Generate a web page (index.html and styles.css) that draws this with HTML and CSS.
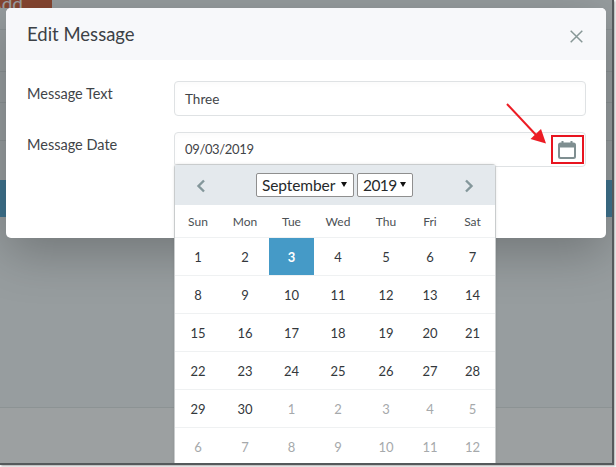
FILE: index.html
```html
<!DOCTYPE html>
<html lang="en">
<head>
<meta charset="utf-8">
<title>Edit Message</title>
<link rel="stylesheet" href="styles.css">
</head>
<body>
<div class="screen">
  <div class="page">
    <div class="page-top"><span class="add-btn">Add</span></div>
    <div class="page-row r1"></div>
    <div class="page-row r2"></div>
    <div class="page-row r3"></div>
    <div class="page-row r4"></div>
    <div class="page-bar"></div>
    <div class="page-space"></div>
    <div class="page-foot"></div>
  </div>
  <div class="backdrop"></div>
  <div class="modal">
    <header class="modal-head">
      <h1 class="modal-title">Edit Message</h1>
      <svg class="close" width="13" height="13" viewBox="0 0 13 13"><path d="M.7.7l11.6 11.6M12.3.7L.7 12.3" fill="none" stroke="#879796" stroke-width="1.500"/></svg>
    </header>
    <div class="modal-body">
      <div class="field">
        <label class="label">Message Text</label>
        <div class="input">Three</div>
      </div>
      <div class="field">
        <label class="label">Message Date</label>
        <div class="input input-date"><span class="date">09/03/2019</span>
          <svg class="cal-icon" width="18" height="18" viewBox="0 0 18 18"><path d="M3.500 0h2v1.500h7V0h2v1.500h1A2.500 2.500 0 0 1 18 4v11.500a2.500 2.500 0 0 1-2.500 2.500h-13A2.500 2.500 0 0 1 0 15.500V4a2.500 2.500 0 0 1 2.500-2.500h1zM2 6.500v9c0 .3.200.5.500.5h13c.3 0 .5-.2.5-.5v-9z" fill="#7f8f91"/></svg>
        </div>
      </div>
    </div>
  </div>
  <div class="calendar">
    <div class="cal-head">
      <svg class="nav" width="10" height="14" viewBox="0 0 10 14"><path d="M8 1.500L2.500 7 8 12.500" fill="none" stroke="#84979b" stroke-width="2.400"/></svg>
      <div class="selects">
        <span class="sel sel-month">September<i class="caret"></i></span>
        <span class="sel sel-year">2019<i class="caret"></i></span>
      </div>
      <svg class="nav" width="10" height="14" viewBox="0 0 10 14"><path d="M2 1.500L7.500 7 2 12.500" fill="none" stroke="#84979b" stroke-width="2.400"/></svg>
    </div>
    <div class="cal-grid">
      <b class="dow">Sun</b><b class="dow">Mon</b><b class="dow">Tue</b><b class="dow">Wed</b><b class="dow">Thu</b><b class="dow">Fri</b><b class="dow">Sat</b>
      <span class="day">1</span><span class="day">2</span><span class="day sel-day">3</span><span class="day">4</span><span class="day">5</span><span class="day">6</span><span class="day">7</span>
      <span class="day">8</span><span class="day">9</span><span class="day">10</span><span class="day">11</span><span class="day">12</span><span class="day">13</span><span class="day">14</span>
      <span class="day">15</span><span class="day">16</span><span class="day">17</span><span class="day">18</span><span class="day">19</span><span class="day">20</span><span class="day">21</span>
      <span class="day">22</span><span class="day">23</span><span class="day">24</span><span class="day">25</span><span class="day">26</span><span class="day">27</span><span class="day">28</span>
      <span class="day">29</span><span class="day">30</span><span class="day off">1</span><span class="day off">2</span><span class="day off">3</span><span class="day off">4</span><span class="day off">5</span>
      <span class="day off">6</span><span class="day off">7</span><span class="day off">8</span><span class="day off">9</span><span class="day off">10</span><span class="day off">11</span><span class="day off">12</span>
    </div>
  </div>
  <div class="callout"></div>
  <svg class="arrow" width="60" height="60" viewBox="0 0 60 60"><path d="M7 5L37 37" stroke="#ec1c24" stroke-width="2" fill="none"/><path d="M46 44.500L30.500 40 41 30z" fill="#ec1c24"/></svg>
</div>
</body>
</html>
```
FILE: styles.css
```css
* { box-sizing: border-box; }
html, body { margin: 0; padding: 0; background: #fff; overflow: hidden; }
body { width: 616px; height: 467px; font-family: Lato, "Noto Sans", sans-serif; color: #3a3f44; }
.screen { position: relative; width: 614px; height: 465px; overflow: hidden; border-right: 2px solid #55595b; border-bottom: 2px solid #55595b; box-shadow: 1px 1px 2px rgba(0,0,0,.35); }

.page { display: flex; flex-direction: column; height: 100%; background: #f6fafb; }
.page-top { height: 30px; border-bottom: 1px solid #e3e8ea; }
.add-btn { display: block; width: 52px; height: 8px; background: #d9653f; color: #fff; font-size: 19px; line-height: 8px; text-indent: -11px; overflow: hidden; }
.page-row { flex: none; border-bottom: 1px solid #e3e8ea; }
.r1 { height: 42px; }
.r2 { height: 31px; }
.r3 { height: 38px; }
.r4 { height: 39px; border-bottom: 0; }
.page-bar { flex: none; height: 37px; background: #5fb4e0; }
.page-space { flex: none; height: 190px; }
.page-foot { flex: 1; border-top: 1px solid #e4e8e9; background: #ffffff; }
.backdrop { position: absolute; inset: 0; background: rgba(20,28,32,.42); }

.modal { position: absolute; left: 6px; top: 8px; width: 600px; height: 230px; background: #fff; border-radius: 5px; box-shadow: 0 14px 50px rgba(0,0,0,.25); }
.modal-head { display: flex; align-items: center; justify-content: space-between; height: 52px; padding: 0 23px 0 21px; background: #f7f8fa; border-radius: 5px 5px 0 0; }
.modal-title { margin: 0; font-size: 18.500px; font-weight: 400; color: #3c4146; }
.close { margin-top: 5px; }
.modal-body { display: flex; flex-direction: column; gap: 16px; padding: 21px 20px 0 21px; }
.field { display: grid; grid-template-columns: 147px 1fr; }
.label { font-size: 14.500px; line-height: 26px; color: #3f4448; }
.input { position: relative; height: 35px; padding-left: 10px; border: 1px solid #dfe2e4; border-radius: 4px; font-size: 13.500px; line-height: 35px; color: #3f4448; box-shadow: inset 0 3px 4px rgba(0,0,0,.015); }
.input-date { line-height: 33px; }
.date { font-size: 13px; letter-spacing: -.35px; }
.cal-icon { position: absolute; right: 9px; top: 8px; }

.calendar { position: absolute; left: 174px; top: 164px; width: 322px; height: 310px; background: #fff; border: 1px solid #c9cccd; border-bottom: 0; border-radius: 4px 4px 0 0; box-shadow: 0 0 3px rgba(0,0,0,.1); }
.cal-head { display: flex; align-items: center; justify-content: space-between; height: 40px; padding: 0 21px; background: #e4e9ed; }
.nav { margin-top: 2px; }
.selects { display: flex; gap: 3px; margin-right: 1px; }
.sel { display: flex; align-items: center; justify-content: space-between; height: 24px; padding: 0 6px 1px 5px; background: #fff; border: 1px solid #8f8f8f; border-radius: 2px; font-size: 15.500px; letter-spacing: -.1px; color: #26292b; }
.sel-month { width: 98px; }
.sel-year { width: 56px; letter-spacing: -.6px; }
.caret { width: 0; height: 0; border: 3px solid transparent; border-top: 5px solid #111; border-bottom: 0; margin-top: -1px; }

.cal-grid { display: grid; grid-template-columns: 46px 48px 45px 48px 48px 40px 45px; grid-template-rows: 32px; grid-auto-rows: 38px; }
.dow { display: flex; align-items: center; justify-content: center; height: 32px; font-size: 12px; font-weight: 400; color: #4b5054; }
.day { display: flex; align-items: center; justify-content: center; border-top: 1px solid #eff1f2; font-size: 13px; color: #33383c; }
.sel-day { background: #459ac7; color: #fff; font-weight: 700; }
.off { color: #a6a9ab; }

.callout { position: absolute; left: 551px; top: 135px; width: 33px; height: 29px; border: 2px solid #e8141f; }
.arrow { position: absolute; left: 500px; top: 99px; }
```
